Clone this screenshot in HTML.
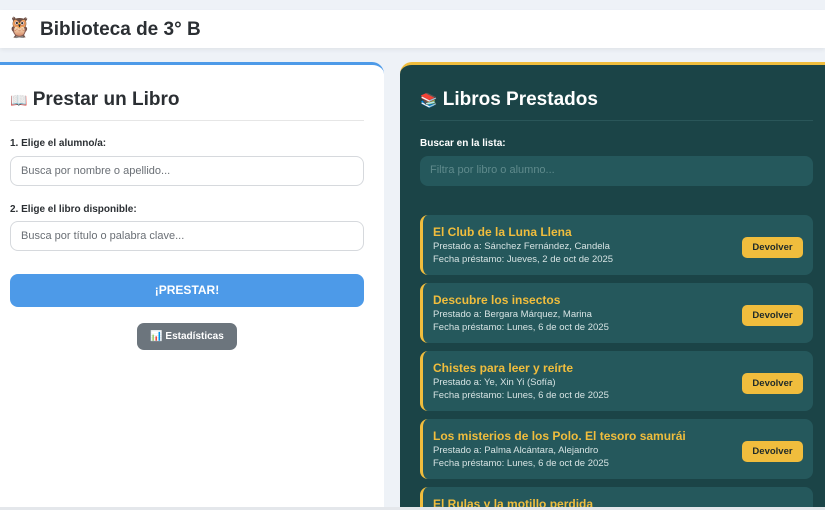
<!DOCTYPE html>
<html style="width:825px;height:510px;overflow:hidden"><head><meta charset="utf-8"><style>
*{box-sizing:border-box;margin:0;padding:0}
body{width:825px;height:510px;overflow:hidden;background:#eef2f7;font-family:"Liberation Sans","DejaVu Sans",sans-serif;position:relative}
.hdr{position:absolute;left:0;top:10px;width:825px;height:38px;background:#fff;box-shadow:0 2px 4px rgba(0,0,0,.06)}
.hdr .owl{position:absolute;left:7px;top:5px;font-size:20px;line-height:26px}
.hdr h1{position:absolute;left:40px;top:9px;font-size:19px;font-weight:bold;color:#2b2f33}
.lp{position:absolute;left:0;top:62px;width:384px;height:445px;background:#fff;border-top:3px solid #4d9ae8;border-radius:0 12px 0 0;overflow:hidden}
.rp{position:absolute;left:400px;top:62px;width:425px;height:445px;background:#1b4447;border-top:3px solid #f0bd3d;border-radius:12px 0 0 0;overflow:hidden}
.t{position:absolute;font-size:19px;font-weight:bold;white-space:nowrap}
.t .e{font-size:14px}
.hr{position:absolute;height:1px}
.lbl{position:absolute;font-size:10px;font-weight:bold}
.in{position:absolute;height:30px;border-radius:8px;font-size:11px;padding:0 10px;line-height:28px}
.card{position:absolute;left:20px;width:393px;height:60px;background:#25585c;border-radius:8px;border-left:3px solid #f0bd3d;overflow:hidden}
.card .a{position:absolute;left:10px;top:10px;font-size:12px;font-weight:bold;color:#f0bd3d;white-space:nowrap}
.card .b{position:absolute;left:10px;top:25px;font-size:9.5px;color:#d6e3e3;line-height:13px;white-space:nowrap}
.card .btn{position:absolute;left:319px;top:22px;width:61px;height:21px;border-radius:5px;background:#f0bd3d;color:#1f2a2a;font-size:9.5px;font-weight:bold;text-align:center;line-height:21px}
</style></head><body>
<div class="hdr"><span class="owl">🦉</span><h1>Biblioteca de 3° B</h1></div>
<div class="lp">
<div class="t" style="left:10px;top:24px;color:#2b2f33"><span class="e">📖</span> Prestar un Libro</div>
<div class="hr" style="left:10px;top:55px;width:354px;background:#e6e6e6"></div>
<div class="lbl" style="left:10px;top:73px;color:#2b2f33">1. Elige el alumno/a:</div>
<div class="in" style="left:10px;top:91px;width:354px;border:1px solid #d6d9dd;color:#6a6f75">Busca por nombre o apellido...</div>
<div class="lbl" style="left:10px;top:139px;color:#2b2f33">2. Elige el libro disponible:</div>
<div class="in" style="left:10px;top:156px;width:354px;border:1px solid #d6d9dd;color:#6a6f75">Busca por título o palabra clave...</div>
<div style="position:absolute;left:10px;top:209px;width:354px;height:33px;background:#4d9ae8;border-radius:8px;color:#fff;font-weight:bold;font-size:12px;text-align:center;line-height:33px">¡PRESTAR!</div>
<div style="position:absolute;left:137px;top:258px;width:100px;height:27px;background:#6c757d;border-radius:7px;color:#fff;font-weight:bold;font-size:10px;text-align:center;line-height:27px">📊 Estadísticas</div>
</div>
<div class="rp">
<div class="t" style="left:20px;top:24px;color:#fff"><span class="e">📚</span> Libros Prestados</div>
<div class="hr" style="left:20px;top:55px;width:393px;background:#2a5659"></div>
<div class="lbl" style="left:20px;top:73px;color:#fff">Buscar en la lista:</div>
<div class="in" style="left:20px;top:91px;width:393px;background:#25585c;color:#5f8a8c">Filtra por libro o alumno...</div>
<div class="card" style="top:150px"><div class="a">El Club de la Luna Llena</div><div class="b">Prestado a: Sánchez Fernández, Candela<br>Fecha préstamo: Jueves, 2 de oct de 2025</div><div class="btn">Devolver</div></div>
<div class="card" style="top:218px"><div class="a">Descubre los insectos</div><div class="b">Prestado a: Bergara Márquez, Marina<br>Fecha préstamo: Lunes, 6 de oct de 2025</div><div class="btn">Devolver</div></div>
<div class="card" style="top:286px"><div class="a">Chistes para leer y reírte</div><div class="b">Prestado a: Ye, Xin Yi (Sofía)<br>Fecha préstamo: Lunes, 6 de oct de 2025</div><div class="btn">Devolver</div></div>
<div class="card" style="top:354px"><div class="a">Los misterios de los Polo. El tesoro samurái</div><div class="b">Prestado a: Palma Alcántara, Alejandro<br>Fecha préstamo: Lunes, 6 de oct de 2025</div><div class="btn">Devolver</div></div>
<div class="card" style="top:422px;height:20px;border-radius:8px 8px 0 0"><div class="a">El Rulas y la motillo perdida</div></div>
</div>
<div style="position:absolute;left:0;top:507px;width:825px;height:3px;background:#e4e7eb"></div>
</body></html>
